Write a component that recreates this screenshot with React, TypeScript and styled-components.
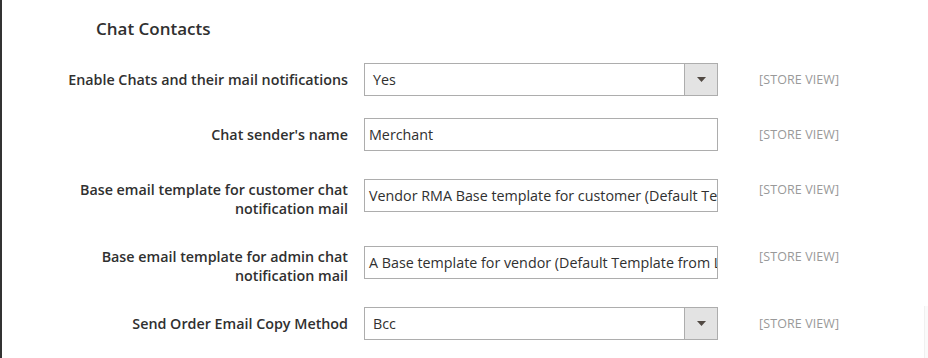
import React from 'react';
import styled, { createGlobalStyle } from 'styled-components';

const GlobalStyle = createGlobalStyle`
	html, body {
		margin: 0;
		padding: 0;
		background: #fff;
	}
	body {
		font-family: 'Open Sans', 'Noto Sans', sans-serif;
		color: #303030;
	}
`;

const Page = styled.div`
	position: relative;
	width: 928px;
	height: 358px;
	box-sizing: border-box;
	border-left: 2px solid #333;
	background: #fff;
	overflow: hidden;
`;

const Title = styled.h3`
	margin: 0;
	padding: 17px 0 0 94px;
	font-size: 17px;
	font-weight: 600;
	line-height: 23px;
	color: #303030;
`;

const Fieldset = styled.div`
	display: flex;
	flex-direction: column;
	padding-top: 23px;
`;

const Row = styled.div<{ $after: number }>`
	display: grid;
	grid-template-columns: 346px 354px 57px auto;
	margin-bottom: ${(p) => p.$after}px;
`;

const Label = styled.label<{ $multi?: boolean }>`
	grid-column: 1;
	text-align: right;
	font-size: 14.3px;
	font-weight: 600;
	line-height: 19px;
	color: #303030;
	padding-top: ${(p) => (p.$multi ? 1 : 7)}px;
`;

const Control = styled.div`
	grid-column: 2;
	padding-left: 16px;
`;

const TextInput = styled.div`
	box-sizing: border-box;
	width: 354px;
	height: 33px;
	border: 1px solid #adadad;
	background: #fff;
	padding: 0 4px;
	font-size: 14.3px;
	line-height: 31px;
	color: #303030;
	white-space: nowrap;
	overflow: hidden;
`;

const Select = styled.div`
	box-sizing: border-box;
	display: flex;
	width: 354px;
	height: 33px;
	border: 1px solid #adadad;
	background: #fff;
`;

const SelectValue = styled.span`
	flex: 1;
	padding-left: 8px;
	font-size: 14.3px;
	line-height: 31px;
	color: #303030;
`;

const SelectButton = styled.span`
	width: 32px;
	border-left: 1px solid #adadad;
	background: #e3e3e3;
	display: flex;
	align-items: center;
	justify-content: center;
`;

const Scope = styled.span<{ $top: number }>`
	grid-column: 4;
	font-size: 12.5px;
	line-height: 17px;
	color: #999;
	text-transform: uppercase;
	padding-top: ${(p) => p.$top}px;
	letter-spacing: 0.1px;
`;

const EdgeShadow = styled.div`
	position: absolute;
	right: 0;
	top: 306px;
	width: 3px;
	height: 60px;
	border-left: 1px solid #f0f0f0;
	background: #fafafa;
`;

const Arrow = () => (
	<svg width="9" height="5" viewBox="0 0 9 5">
		<path d="M0 0 H9 L4.5 5 Z" fill="#514943" />
	</svg>
);

interface FieldProps {
	label: React.ReactNode;
	multi?: boolean;
	after: number;
	select?: boolean;
	value: string;
}

const Field = ({ label, multi, after, select, value }: FieldProps) => (
	<Row $after={after}>
		<Label $multi={multi}>{label}</Label>
		<Control>
			{select ? (
				<Select>
					<SelectValue>{value}</SelectValue>
					<SelectButton>
						<Arrow />
					</SelectButton>
				</Select>
			) : (
				<TextInput>{value}</TextInput>
			)}
		</Control>
		<Scope $top={multi ? 2 : 8}>[Store View]</Scope>
	</Row>
);

export default function App() {
	return (
		<Page>
			<GlobalStyle />
			<Title>Chat Contacts</Title>
			<Fieldset>
				<Field label="Enable Chats and their mail notifications" after={22} select value="Yes" />
				<Field label="Chat sender's name" after={28} value="Merchant" />
				<Field
					label={
						<>
							Base email template for customer chat
							<br />
							notification mail
						</>
					}
					multi
					after={28}
					value="Vendor RMA Base template for customer (Default Template from Locale)"
				/>
				<Field
					label={
						<>
							Base email template for admin chat
							<br />
							notification mail
						</>
					}
					multi
					after={22}
					value="A Base template for vendor (Default Template from Locale)"
				/>
				<Field label="Send Order Email Copy Method" after={0} select value="Bcc" />
			</Fieldset>
			<EdgeShadow />
		</Page>
	);
}
